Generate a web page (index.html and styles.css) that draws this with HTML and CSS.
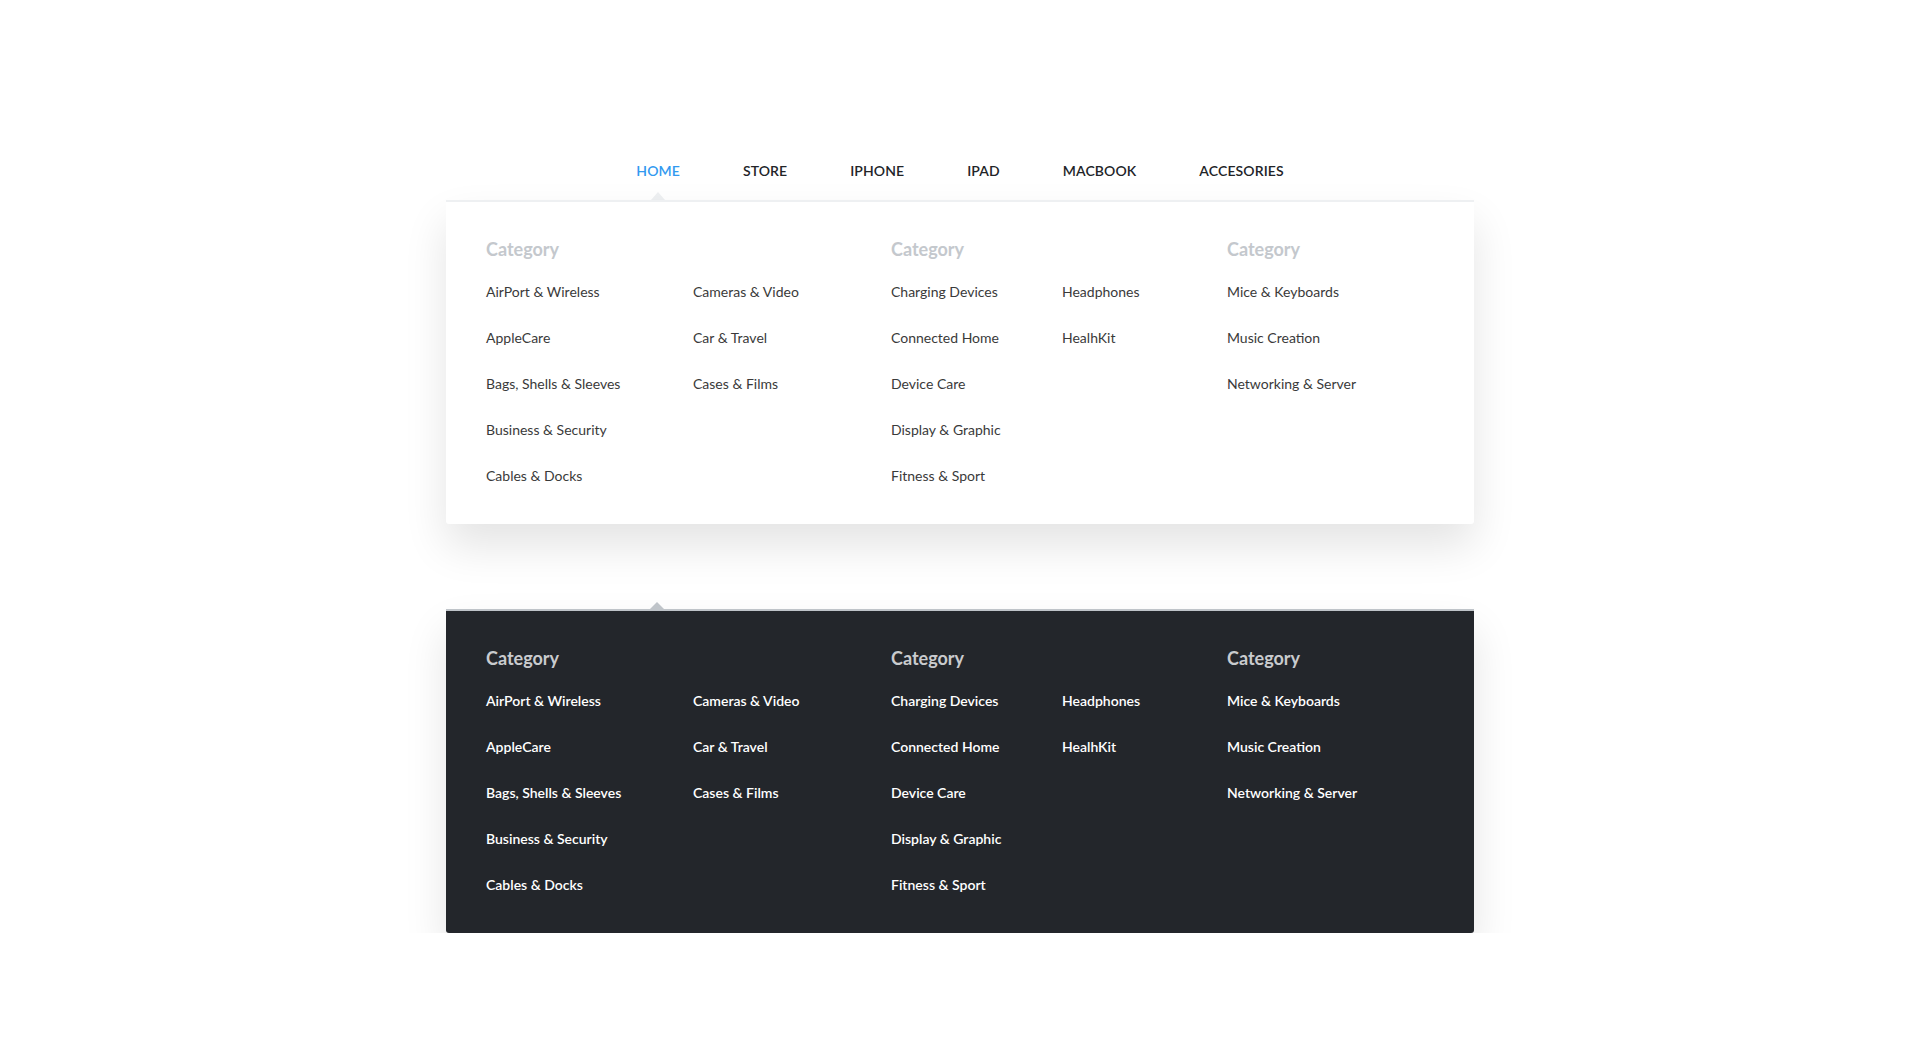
FILE: index.html
```html
<!DOCTYPE html>
<html lang="en">
<head>
<meta charset="utf-8">
<title>Mega menu</title>
<link rel="stylesheet" href="styles.css">
</head>
<body>
<div class="wrap">
  <nav class="nav">
    <a class="nav-item active">HOME</a>
    <a class="nav-item">STORE</a>
    <a class="nav-item">IPHONE</a>
    <a class="nav-item">IPAD</a>
    <a class="nav-item">MACBOOK</a>
    <a class="nav-item">ACCESORIES</a>
  </nav>

  <div class="panel light">
    <div class="group g1">
      <h3 class="heading">Category</h3>
      <div class="cols">
        <ul class="col c1">
          <li>AirPort &amp; Wireless</li>
          <li>AppleCare</li>
          <li>Bags, Shells &amp; Sleeves</li>
          <li>Business &amp; Security</li>
          <li>Cables &amp; Docks</li>
        </ul>
        <ul class="col">
          <li>Cameras &amp; Video</li>
          <li>Car &amp; Travel</li>
          <li>Cases &amp; Films</li>
        </ul>
      </div>
    </div>
    <div class="group g2">
      <h3 class="heading">Category</h3>
      <div class="cols">
        <ul class="col c2">
          <li>Charging Devices</li>
          <li>Connected Home</li>
          <li>Device Care</li>
          <li>Display &amp; Graphic</li>
          <li>Fitness &amp; Sport</li>
        </ul>
        <ul class="col">
          <li>Headphones</li>
          <li>HealhKit</li>
        </ul>
      </div>
    </div>
    <div class="group g3">
      <h3 class="heading">Category</h3>
      <div class="cols">
        <ul class="col">
          <li>Mice &amp; Keyboards</li>
          <li>Music Creation</li>
          <li>Networking &amp; Server</li>
        </ul>
      </div>
    </div>
  </div>

  <div class="panel dark">
    <span class="caret"></span>
    <div class="group g1">
      <h3 class="heading">Category</h3>
      <div class="cols">
        <ul class="col c1">
          <li>AirPort &amp; Wireless</li>
          <li>AppleCare</li>
          <li>Bags, Shells &amp; Sleeves</li>
          <li>Business &amp; Security</li>
          <li>Cables &amp; Docks</li>
        </ul>
        <ul class="col">
          <li>Cameras &amp; Video</li>
          <li>Car &amp; Travel</li>
          <li>Cases &amp; Films</li>
        </ul>
      </div>
    </div>
    <div class="group g2">
      <h3 class="heading">Category</h3>
      <div class="cols">
        <ul class="col c2">
          <li>Charging Devices</li>
          <li>Connected Home</li>
          <li>Device Care</li>
          <li>Display &amp; Graphic</li>
          <li>Fitness &amp; Sport</li>
        </ul>
        <ul class="col">
          <li>Headphones</li>
          <li>HealhKit</li>
        </ul>
      </div>
    </div>
    <div class="group g3">
      <h3 class="heading">Category</h3>
      <div class="cols">
        <ul class="col">
          <li>Mice &amp; Keyboards</li>
          <li>Music Creation</li>
          <li>Networking &amp; Server</li>
        </ul>
      </div>
    </div>
  </div>
</div>
</body>
</html>
```

FILE: styles.css
```css
* { box-sizing: border-box; }

html, body {
  margin: 0;
  padding: 0;
  background: #ffffff;
}

body {
  font-family: Lato, "Noto Sans", "Liberation Sans", sans-serif;
  color: #3a3a3a;
}

.wrap {
  width: 1028px;
  margin: 0 auto;
}

.nav {
  display: flex;
  justify-content: center;
  gap: 63px;
  padding-top: 161px;
}

.nav-item {
  position: relative;
  display: block;
  font-size: 14px;
  font-weight: 600;
  line-height: 20px;
  padding-bottom: 19px;
  color: #222428;
  letter-spacing: 0.1px;
}

.nav-item.active {
  color: #3299f0;
}

.nav-item.active::after {
  content: "";
  position: absolute;
  left: 50%;
  bottom: 0;
  margin-left: -7px;
  border-left: 7px solid transparent;
  border-right: 7px solid transparent;
  border-bottom: 8px solid #eef0f2;
}

.panel {
  position: relative;
  display: flex;
  padding: 36px 40px 25px;
  border-radius: 0 0 3px 3px;
  box-shadow: 0 22px 44px rgba(0, 0, 0, 0.11);
}

.panel.light {
  background: #ffffff;
  border-top: 2px solid #eef0f2;
}

.panel.dark {
  margin-top: 85px;
  background: #23262b;
  border-top: 2px solid #bfc4c9;
}

.caret {
  position: absolute;
  top: -9px;
  left: 204px;
  border-left: 7px solid transparent;
  border-right: 7px solid transparent;
  border-bottom: 7px solid #bfc4c9;
}

.group.g1 { width: 405px; }
.group.g2 { width: 336px; }
.group.g3 { flex: 1; }

.heading {
  margin: 0 0 9px;
  font-size: 18px;
  font-weight: 700;
  line-height: 22px;
  color: #c4c8cd;
}

.cols {
  display: flex;
}

.col {
  list-style: none;
  margin: 0;
  padding: 0;
}

.col.c1 { width: 207px; }
.col.c2 { width: 171px; }

.col li {
  font-size: 14px;
  line-height: 46px;
  height: 46px;
  color: #3a3a3a;
  white-space: nowrap;
}

.dark .heading {
  color: #c9cbce;
}

.dark .col li {
  color: #ffffff;
  font-weight: 600;
}
```
